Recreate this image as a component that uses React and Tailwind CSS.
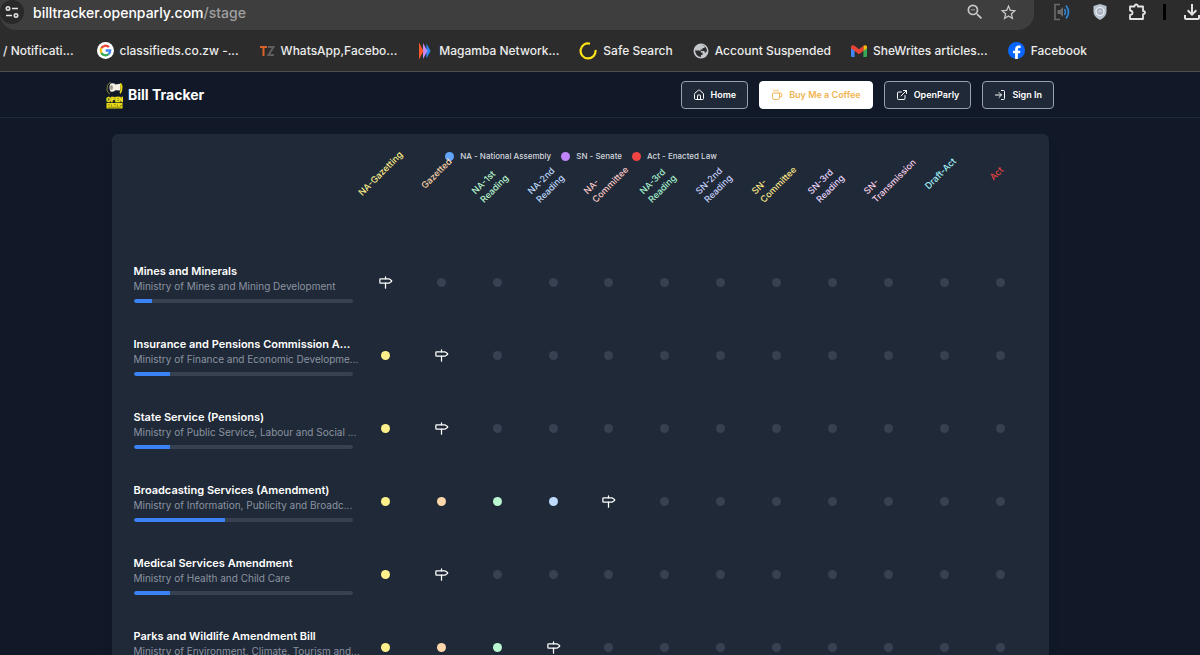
import React from 'react';
import { Coffee, ExternalLink, House, LogIn, Milestone } from 'lucide-react';
import { MdOutlineFileDownload, MdStarBorder, MdZoomOut } from 'react-icons/md';

const stages = [
  { id: 'na-gazetting', lines: ['NA-Gazetting'], text: 'text-[#fef08a]', dot: 'bg-[#fef08a]' },
  { id: 'gazetted', lines: ['Gazetted'], text: 'text-[#fed7aa]', dot: 'bg-[#fed7aa]' },
  { id: 'na-1st', lines: ['NA-1st', 'Reading'], text: 'text-[#bbf7d0]', dot: 'bg-[#bbf7d0]' },
  { id: 'na-2nd', lines: ['NA-2nd', 'Reading'], text: 'text-[#bfdbfe]', dot: 'bg-[#bfdbfe]' },
  { id: 'na-committee', lines: ['NA-', 'Committee'], text: 'text-[#fecaca]', dot: 'bg-[#fecaca]' },
  { id: 'na-3rd', lines: ['NA-3rd', 'Reading'], text: 'text-[#a7f3d0]', dot: 'bg-[#a7f3d0]' },
  { id: 'sn-2nd', lines: ['SN-2nd', 'Reading'], text: 'text-[#c7d2fe]', dot: 'bg-[#c7d2fe]' },
  { id: 'sn-committee', lines: ['SN-', 'Committee'], text: 'text-[#fde68a]', dot: 'bg-[#fde68a]' },
  { id: 'sn-3rd', lines: ['SN-3rd', 'Reading'], text: 'text-[#e9d5ff]', dot: 'bg-[#e9d5ff]' },
  { id: 'sn-transmission', lines: ['SN-', 'Transmission'], text: 'text-[#fbcfe8]', dot: 'bg-[#fbcfe8]' },
  { id: 'draft-act', lines: ['Draft-Act'], text: 'text-[#a5f3fc]', dot: 'bg-[#a5f3fc]' },
  { id: 'act', lines: ['Act'], text: 'text-[#ef4444]', dot: 'bg-[#ef4444]' },
];

// current = index of the stage the bill is in
const bills = [
  { title: 'Mines and Minerals', ministry: 'Ministry of Mines and Mining Development', current: 0 },
  { title: 'Insurance and Pensions Commission A...', ministry: 'Ministry of Finance and Economic Developme...', current: 1 },
  { title: 'State Service (Pensions)', ministry: 'Ministry of Public Service, Labour and Social ...', current: 1 },
  { title: 'Broadcasting Services (Amendment)', ministry: 'Ministry of Information, Publicity and Broadc...', current: 4 },
  { title: 'Medical Services Amendment', ministry: 'Ministry of Health and Child Care', current: 1 },
  { title: 'Parks and Wildlife Amendment Bill', ministry: 'Ministry of Environment, Climate, Tourism and...', current: 3 },
];

const legend = [
  { label: 'NA - National Assembly', color: 'bg-[#60a5fa]' },
  { label: 'SN - Senate', color: 'bg-[#c084fc]' },
  { label: 'Act - Enacted Law', color: 'bg-[#ef4444]' },
];

const GoogleIcon = () => (
  <svg viewBox="0 0 24 24" className="size-[17px] shrink-0">
    <circle cx="12" cy="12" r="12" fill="#fff" />
    <g fill="none" strokeWidth="3.2">
      <path d="M6.1 8.7A6.8 6.8 0 0 1 16.8 7.2" stroke="#ea4335" />
      <path d="M6.1 15.3a6.8 6.8 0 0 1 0-6.6" stroke="#fbbc05" />
      <path d="M16.4 17.2A6.8 6.8 0 0 1 6.1 15.3" stroke="#34a853" />
      <path d="M12.2 12h6.5a6.8 6.8 0 0 1-2.3 5.2" stroke="#4285f4" />
    </g>
  </svg>
);

const TzIcon = () => (
  <svg viewBox="0 0 16 16" className="size-4 shrink-0" fill="none" strokeWidth="2">
    <path d="M1 4h7M4.5 4v9" stroke="#d9622b" />
    <path d="M9 4h5.5L9.5 12h5.5" stroke="#5f5f5f" />
  </svg>
);

const MagambaIcon = () => (
  <svg viewBox="0 0 16 18" className="h-[18px] w-4 shrink-0">
    <path d="M9.5 1.5L13.5 9l-4 7.5z" fill="#2a8cff" />
    <path d="M6 1l4.5 8L6 17z" fill="#c58af0" />
    <path d="M2 .5L6.5 9 2 17.5z" fill="#ff5a26" />
  </svg>
);

const RingIcon = () => (
  <svg viewBox="0 0 18 18" className="size-[18px] shrink-0" fill="none">
    <path d="M11 1.7A7.5 7.5 0 1 0 16.5 8" stroke="#fde317" strokeWidth="2.2" />
  </svg>
);

const GlobeIcon = () => (
  <svg viewBox="0 0 16 16" className="size-4 shrink-0">
    <circle cx="8" cy="8" r="7.5" fill="#c4c7cc" />
    <path d="M2 7.5h4q2 0 2 2h1.5v2.5H8V14Q3 14 2 7.5z" fill="#2c2c2c" />
    <path d="M8.5 2l3 1.2V5H9.5v1.5H7.5V8h4v1.5h1.5L14 7.5Q13 2.5 8.500 2z" fill="#2c2c2c" />
  </svg>
);

const GmailIcon = () => (
  <svg viewBox="0 0 16 12" className="h-3 w-4 shrink-0">
    <path d="M0 2v9q0 1 1 1h2.6V5z" fill="#4285f4" />
    <path d="M16 2v9q0 1-1 1h-2.6V5z" fill="#34a853" />
    <path d="M12.4.8Q15-.8 16 1.5v1.8l-3.6 2.7z" fill="#fbbc04" />
    <path d="M0 1.5Q1-.8 3.6.8L8 4.2 12.4.8V6L8 9.3 3.6 6 0 3.3z" fill="#ea4335" />
  </svg>
);

const FacebookIcon = () => (
  <svg viewBox="0 0 24 24" className="size-[17px] shrink-0">
    <circle cx="12" cy="12" r="12" fill="#0866ff" />
    <path d="M10 24v-8H7v-3.7h3v-1.6c0-4 1.9-5.9 5.8-5.9l2 .2v3.4h-1.5c-1.8 0-2.4.7-2.4 2.3v1.6h3.7l-.7 3.7h-3v8z" fill="#fff" />
  </svg>
);

const bookmarks = [
  { label: 'classifieds.co.zw -...', icon: GoogleIcon },
  { label: 'WhatsApp,Facebo...', icon: TzIcon },
  { label: 'Magamba Network...', icon: MagambaIcon },
  { label: 'Safe Search', icon: RingIcon },
  { label: 'Account Suspended', icon: GlobeIcon },
  { label: 'SheWrites articles...', icon: GmailIcon },
  { label: 'Facebook', icon: FacebookIcon },
];

function BrowserBar() {
  return (
    <div className="shrink-0 border-b border-[#4d4d4d] bg-[#2c2c2c] font-['Inter',sans-serif]">
      <div className="flex h-[30px] items-start overflow-hidden">
        <div className="flex h-full min-w-0 flex-1 items-start rounded-b-2xl bg-[#3e3e3e] pr-4">
          <button aria-label="Site information" className="flex size-6 shrink-0 items-center justify-center rounded-full bg-[#292929]">
            <svg viewBox="0 0 14 12" className="h-3 w-3.5" fill="none" stroke="#e3e3e3" strokeWidth="1.6">
              <circle cx="3" cy="2.5" r="1.7" />
              <path d="M7 2.5h6M1 9.5h6" />
              <circle cx="11" cy="9.5" r="1.7" />
            </svg>
          </button>
          <span className="ml-[9px] flex-1 truncate text-sm leading-[25px] font-medium text-white">
            billtracker.openparly.com<span className="text-[#a0a0a0]">/stage</span>
          </span>
          <div className="flex h-6 items-center gap-3.5 text-[#c7c7c7]">
            <button aria-label="Zoom"><MdZoomOut size={20} /></button>
            <button aria-label="Bookmark this page"><MdStarBorder size={19} /></button>
          </div>
        </div>
        <div className="flex h-6 shrink-0 items-center pl-5">
          <button aria-label="Read aloud">
            <svg viewBox="0 0 16 18" className="h-[18px] w-4" fill="none">
              <path d="M6 1.5H1v15h5" stroke="#6b6b6b" strokeWidth="1.6" />
              <path d="M3.5 7v4h2.5l3 3V4L6 7z" fill="#6b6b6b" />
              <path d="M10.5 6q2 3 0 6" stroke="#2f86d6" strokeWidth="1.5" />
              <path d="M12 2.5q5 6.5 0 13" stroke="#2f86d6" strokeWidth="1.7" />
            </svg>
          </button>
          <button aria-label="Shield" className="ml-[22px]">
            <svg viewBox="0 0 16 18" className="h-[18px] w-4">
              <path d="M8 1l6.5 2v5.5q0 5.5-6.5 8.5Q1.5 14 1.5 8.5V3z" fill="#b9c2cf" />
              <circle cx="8" cy="8.5" r="4" fill="#a7b1bf" stroke="#eef1f5" strokeWidth="1.2" />
              <path d="M6.5 9q1.5-2.5 3-.5" fill="none" stroke="#eef1f5" />
            </svg>
          </button>
          <button aria-label="Extensions" className="ml-5 text-[#e3e3e3]">
            <svg viewBox="0 0 18 18" className="size-[18px]" fill="none" stroke="currentColor" strokeWidth="1.8" strokeLinejoin="round">
              <path d="M2 3.5h4.5q0-2 1.7-2t1.7 2H15V8q2 0 2 1.6t-2 1.6V16H2v-4q2.5-.2 2.5-2.2T2 7.5z" />
            </svg>
          </button>
          <span className="ml-[17px] h-4 w-[3px] bg-black" />
          <button aria-label="Downloads" className="ml-3.5 -mr-1 text-[#e3e3e3]"><MdOutlineFileDownload size={24} /></button>
        </div>
      </div>
      <nav aria-label="Bookmarks" className="flex h-[41px] items-center gap-5 overflow-hidden text-xs font-medium whitespace-nowrap text-[#ececec]">
        <a href="#notifications" className="px-[3px]">/ Notificati...</a>
        {bookmarks.map(({ label, icon: Icon }) => (
          <a key={label} href="#bookmark" className="flex items-center gap-1.5">
            <Icon />
            {label}
          </a>
        ))}
      </nav>
    </div>
  );
}

function Logo() {
  return (
    <svg viewBox="0 0 17 28" className="h-7 w-[17px]">
      <path d="M4.5 1Q0 4 1 9q.5 3 3 4" fill="none" stroke="#8f8c30" strokeWidth=".9" />
      <path d="M4.5 2.5Q8 1.5 9.5 3.5L14 2.8V9.5l-4.5-.3Q7 11.5 4.5 10.5 2.5 6.5 4.5 2.5z" fill="#f4f1e4" />
      <ellipse cx="5.5" cy="6.5" rx="1.4" ry="2.6" fill="#9c998a" />
      <path d="M14 2q2.5 0 2.5 4.5T14.5 13l-1-1.5.8-2z" fill="#e9d91c" />
      <text x=".2" y="20.5" fontSize="6.5" fontWeight="900" fontFamily="Roboto, sans-serif" fill="#f5e61a" stroke="#f5e61a" strokeWidth=".4">OPEN</text>
      <path d="M.5 22h16v5.5H.5z" fill="#e9da14" />
      <path d="M2 23.7h2M5.5 23.5v2M8 23.7h2M11.5 23.5v2M14 24.5h2M2 26.2h13" stroke="#6d6810" strokeWidth=".7" />
    </svg>
  );
}

const navButton = 'flex h-7 items-center gap-1.5 rounded-[4px] border px-[11px] text-[9px] font-semibold';

function Header() {
  return (
    <header className="border-b border-gray-800 bg-[#111827] pr-10">
      <div className="mx-auto flex h-[45px] w-full max-w-[948px] items-center justify-between">
        <a href="#home" className="flex items-center gap-[5px] text-sm font-bold text-white">
          <Logo />
          Bill Tracker
        </a>
        <nav className="flex items-center gap-[11px] whitespace-nowrap">
          <a href="#home" className={`${navButton} border-gray-400 bg-[#1f2937] text-white`}><House size={12} />Home</a>
          <a href="#coffee" className={`${navButton} border-white bg-white text-[#f0b450]`}><Coffee size={12} />Buy Me a Coffee</a>
          <a href="#openparly" className={`${navButton} border-gray-400 bg-[#1f2937] text-white`}><ExternalLink size={12} />OpenParly</a>
          <a href="#signin" className={`${navButton} border-gray-400 bg-[#1f2937] text-white`}><LogIn size={12} />Sign In</a>
        </nav>
      </div>
    </header>
  );
}

function StageCell({ stage, index, current }) {
  return (
    <td className="p-0">
      <div className="flex justify-center">
        {index === current ? (
          <Milestone size={15} className="text-white" />
        ) : (
          <span className={`size-[9px] rounded-full ${index < current ? stage.dot : 'bg-[#374151]'}`} />
        )}
      </div>
    </td>
  );
}

function StageTable() {
  return (
    <table className="w-full table-fixed border-collapse">
      <thead>
        <tr className="h-[84px] align-top">
          <th aria-label="Bill" className="w-1/4 p-0" />
          {stages.map((stage) => (
            <th key={stage.id} className="p-0 pt-[5px]">
              <div className="flex justify-center pr-1.5">
                <div className={`flex h-4 w-[54px] shrink-0 -rotate-45 items-start text-left text-[9px] leading-3 font-medium whitespace-nowrap ${stage.lines.length === 1 ? 'justify-center' : ''} ${stage.text}`}>
                  <span>
                    {stage.lines.map((line) => (
                      <span key={line} className="block">{line}</span>
                    ))}
                  </span>
                </div>
              </div>
            </th>
          ))}
        </tr>
      </thead>
      <tbody>
        {bills.map((bill) => (
          <tr key={bill.title} className="h-[73px]">
            <td className="p-0 pr-1">
              <p className="text-[11px] leading-4 font-semibold whitespace-nowrap text-white">{bill.title}</p>
              <p className="text-[10px] leading-[14px] whitespace-nowrap text-[#8b93a1]">{bill.ministry}</p>
              <div className="mt-1.5 h-1 overflow-hidden rounded-full bg-[#374151]">
                <div className="h-full rounded-l-full bg-[#3b82f6]" style={{ width: `${((bill.current + 1) / stages.length) * 100}%` }} />
              </div>
            </td>
            {stages.map((stage, i) => (
              <StageCell key={stage.id} stage={stage} index={i} current={bill.current} />
            ))}
          </tr>
        ))}
      </tbody>
    </table>
  );
}

export default function App() {
  return (
    <div className="flex h-screen flex-col overflow-hidden bg-[#111827]">
      <BrowserBar />
      <div className="min-h-0 flex-1 overflow-hidden font-['Inter',sans-serif]">
        <Header />
        <main className="pt-4 pr-10">
          <section className="mx-auto w-full max-w-[937px] rounded-md bg-[#1f2937] pt-4 pr-5 pb-6 pl-[22px] shadow-lg">
            <ul className="flex h-3 items-center justify-center gap-2.5 text-[8px] font-medium text-gray-300">
              {legend.map((item) => (
                <li key={item.label} className="flex items-center gap-1.5 whitespace-nowrap">
                  <span className={`size-[9px] rounded-full ${item.color}`} />
                  {item.label}
                </li>
              ))}
            </ul>
            <StageTable />
          </section>
        </main>
      </div>
    </div>
  );
}
